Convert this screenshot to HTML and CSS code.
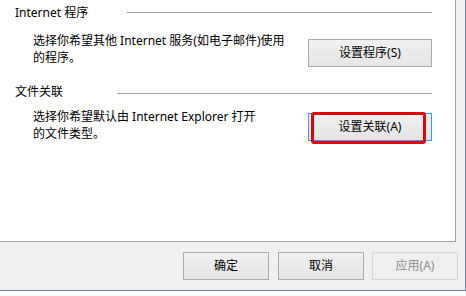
FILE: index.html
```html
<!DOCTYPE html>
<html lang="zh-CN">
<head>
<meta charset="utf-8">
<title>Internet 选项 - 程序</title>
<link rel="stylesheet" href="styles.css">
</head>
<body>
<div class="dialog">
  <div class="panel">
    <div class="head">
      <span class="head-label label-prog">Internet 程序</span>
      <span class="rule"></span>
    </div>
    <div class="row">
      <p class="desc">选择你希望其他 Internet 服务(如电子邮件)使用<br>的程序。</p>
      <button class="btn btn-wide btn-prog">设置程序(S)</button>
    </div>
    <div class="head head-assoc">
      <span class="head-label label-assoc">文件关联</span>
      <span class="rule rule-assoc"></span>
    </div>
    <div class="row row-assoc">
      <p class="desc">选择你希望默认由 Internet Explorer 打开<br>的文件类型。</p>
      <button class="btn btn-wide btn-focus">设置关联(A)<span class="mark"></span></button>
    </div>
  </div>
  <div class="footer">
    <button class="btn btn-ok">确定</button>
    <button class="btn">取消</button>
    <button class="btn btn-disabled" disabled>应用(A)</button>
  </div>
</div>
</body>
</html>
```
FILE: styles.css
```css
* { box-sizing: border-box; }
html, body { margin: 0; padding: 0; }
body {
  width: 466px;
  height: 296px;
  overflow: hidden;
  background: #ffffff;
  font-family: "Noto Sans", "Noto Sans CJK SC", sans-serif;
  font-size: 12px;
  color: #000000;
}
.dialog {
  width: 466px;
  height: 291px;
  background: #f0f0f0;
  border-right: 1px solid #7083a6;
  border-bottom: 1px solid #7083a6;
}
.panel {
  width: 456px;
  height: 242px;
  background: #ffffff;
  border-right: 1px solid #a0a0a0;
  border-bottom: 1px solid #a0a0a0;
  padding: 4px 23px 0 15px;
}
.head {
  display: flex;
  align-items: flex-start;
  height: 17px;
  line-height: 17px;
  white-space: nowrap;
}
.head-assoc { margin-top: 16px; }
.head-label { flex: none; }
.label-prog { width: 112px; }
.label-assoc { width: 102px; }
.rule {
  flex: 1;
  height: 1px;
  margin-top: 8px;
  background: #a0a0a0;
}
.rule-assoc { margin-top: 10px; }
.row {
  display: flex;
  justify-content: space-between;
  align-items: flex-start;
  margin-top: 11px;
}
.row-assoc { margin-top: 8px; }
.desc {
  margin: 0 0 0 18px;
  line-height: 17px;
  white-space: nowrap;
}
.btn {
  font-family: inherit;
  font-size: 12px;
  color: #000000;
  width: 86px;
  height: 28px;
  margin: 0;
  padding: 0;
  line-height: 26px;
  border: 1px solid #acacac;
  border-radius: 0;
  background: linear-gradient(#f0f0f0, #e5e5e5);
}
.btn-wide { width: 124px; }
.btn-prog { margin-top: 7px; }
.btn-focus {
  position: relative;
  margin-top: 5px;
  border-color: #3399ff;
}
.mark {
  position: absolute;
  left: 2px;
  top: -2px;
  width: 115px;
  height: 32px;
  border: 3px solid #e60000;
  border-radius: 3px;
}
.footer {
  display: flex;
  justify-content: flex-end;
  gap: 8px;
  padding: 10px 7px 0 0;
}
.btn-ok { margin-right: 1px; }
.btn-disabled {
  color: #8d8d8d;
  border-color: #d5d5d5;
  background: #efefef;
}
```
